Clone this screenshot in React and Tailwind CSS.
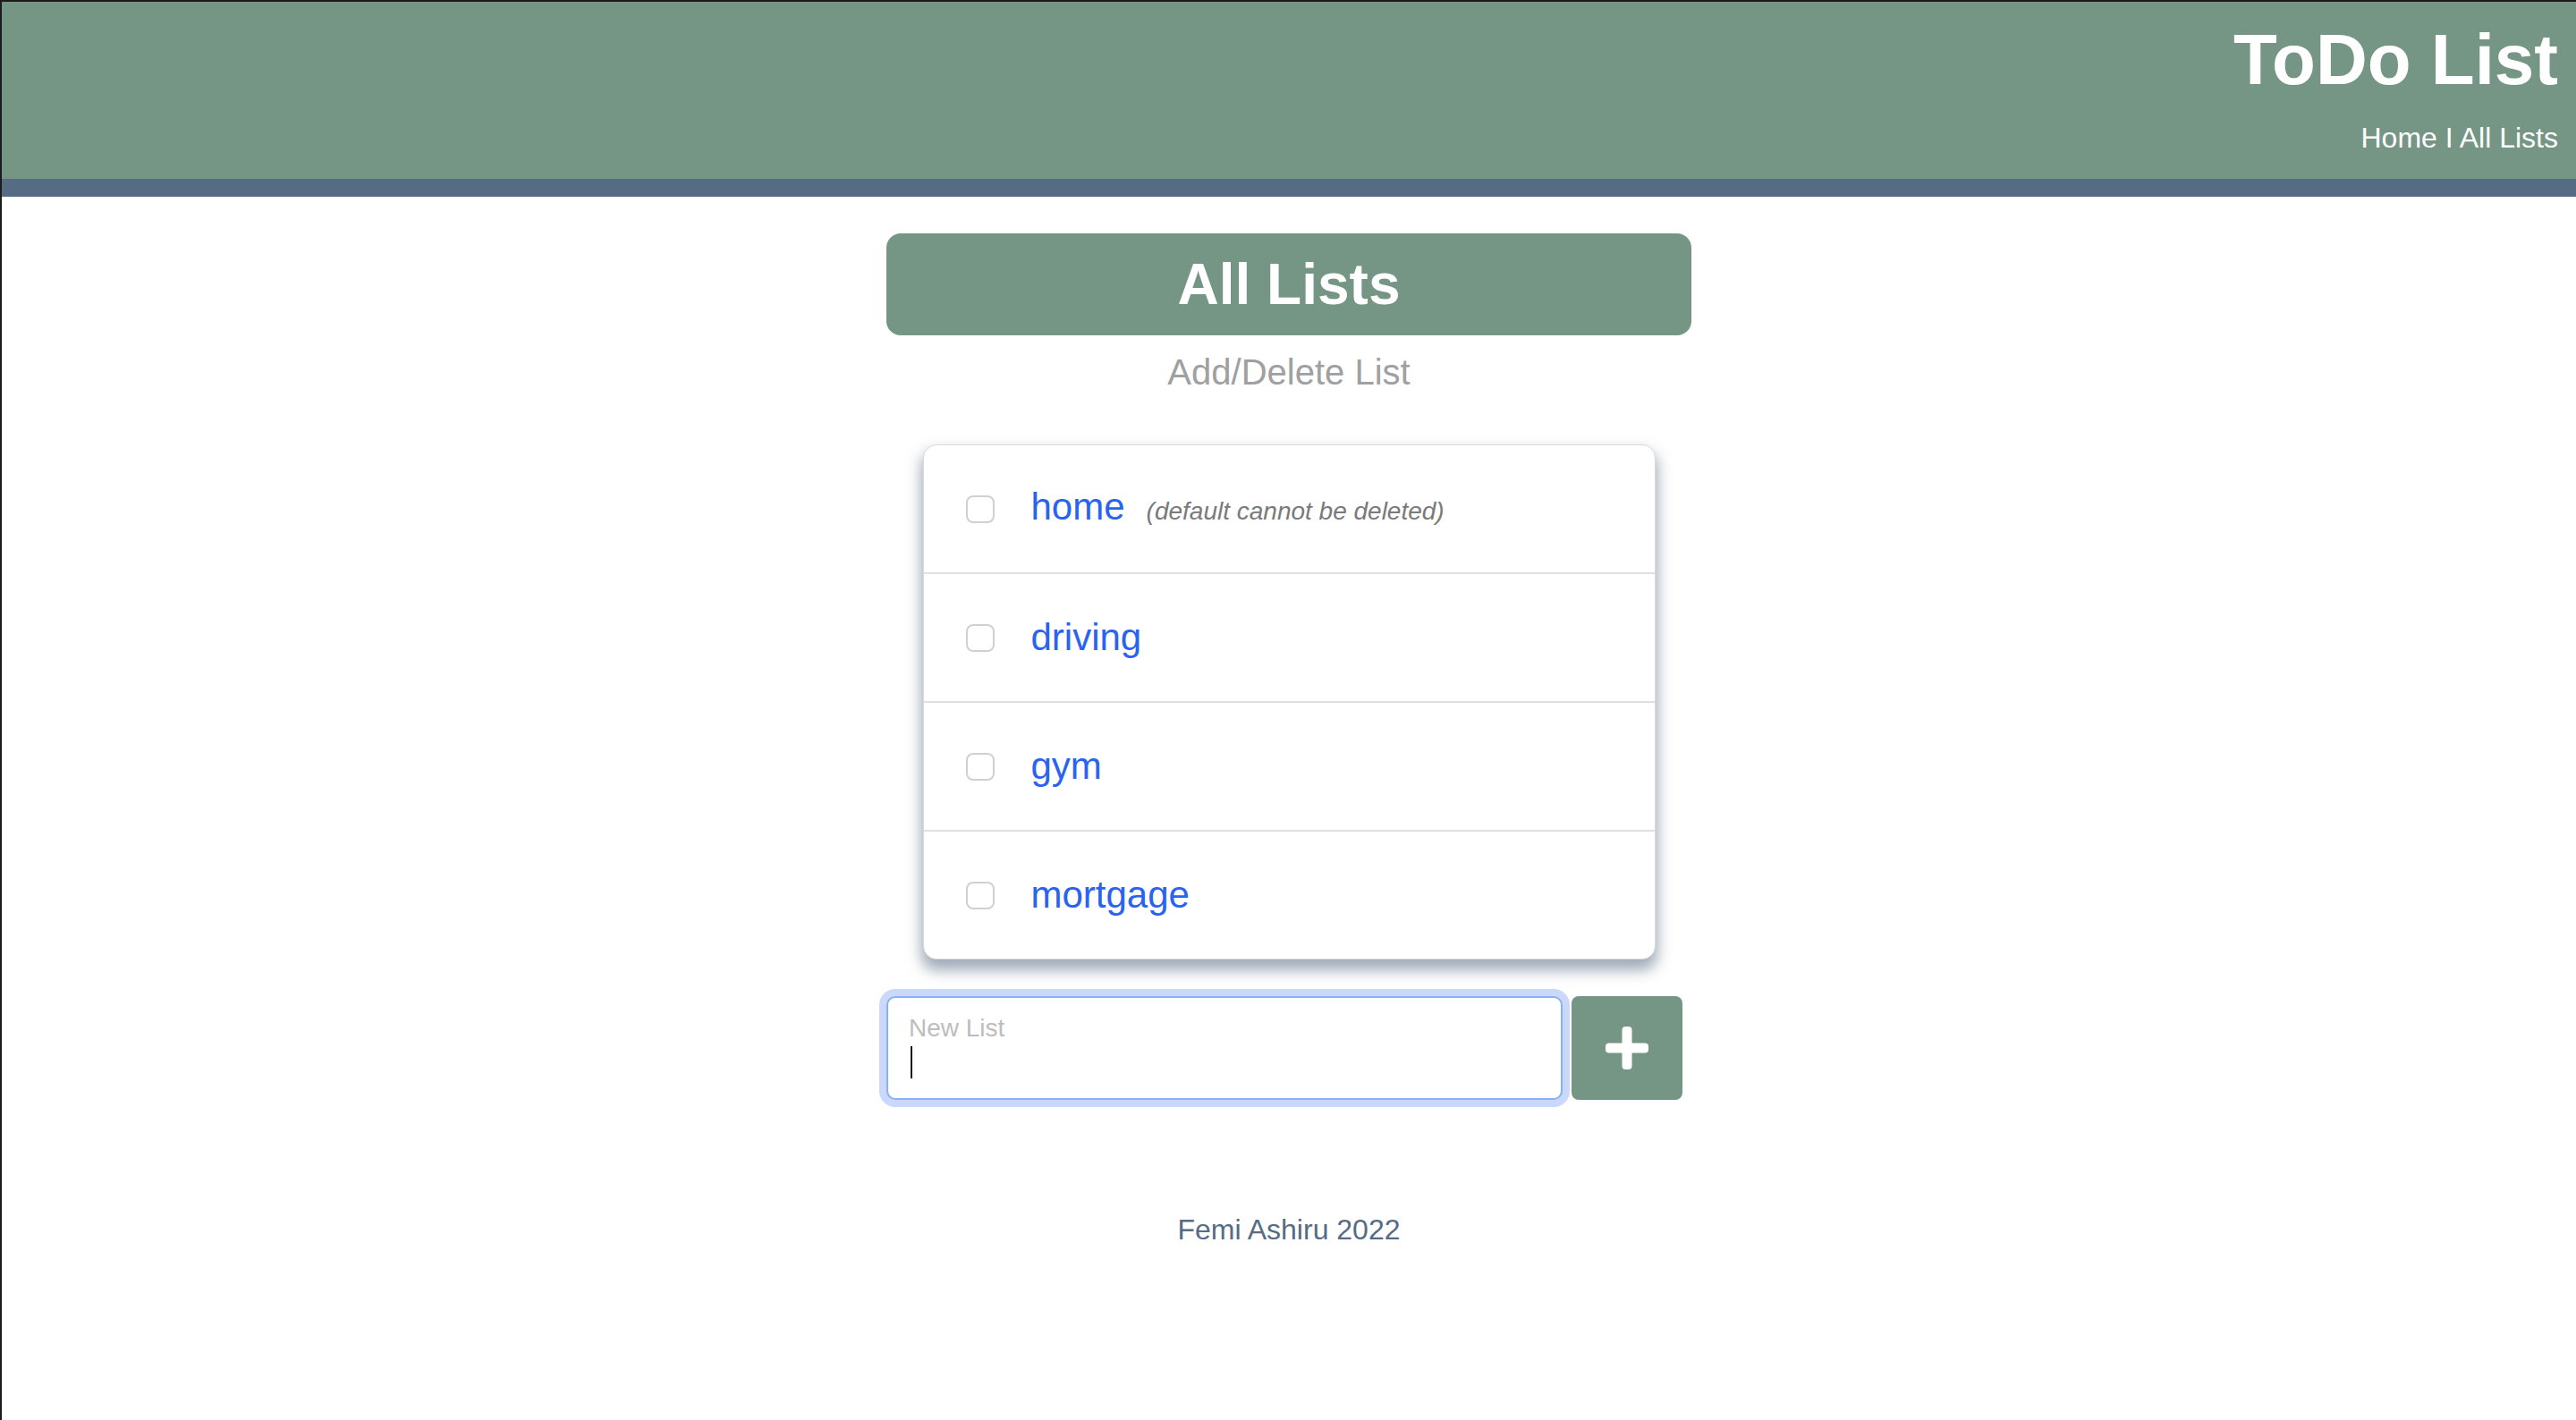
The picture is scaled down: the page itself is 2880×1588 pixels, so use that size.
import { useState } from 'react';

const lists = [
  { id: 1, name: 'home', note: '(default cannot be deleted)' },
  { id: 2, name: 'driving' },
  { id: 3, name: 'gym' },
  { id: 4, name: 'mortgage' },
];

function PlusIcon() {
  return (
    <svg width="48" height="48" viewBox="0 0 48 48" fill="#fff">
      <rect x="0" y="18.5" width="48" height="11" rx="4" />
      <rect x="18.5" y="0" width="11" height="48" rx="4" />
    </svg>
  );
}

export default function App() {
  const [checked, setChecked] = useState({});
  const [newList, setNewList] = useState('');

  const toggle = (id) => setChecked((c) => ({ ...c, [id]: !c[id] }));

  return (
    <div className="min-h-screen bg-white border-l-2 border-t-2 border-[#1c1c1c] font-[family-name:'Liberation_Sans',Arial,Helvetica,sans-serif]">
      {/* Header */}
      <header>
        <div className="h-[198px] bg-[#759685] flex flex-col items-end pr-[20px] pt-[25px] text-white">
          <h1 className="text-[80px] leading-[80px] font-bold">ToDo List</h1>
          <nav className="mt-[31px] text-[32px] leading-[32px]">
            <a href="#">Home</a> I <a href="#">All Lists</a>
          </nav>
        </div>
        <div className="h-[20px] bg-[#566b84]" />
      </header>

      <main className="flex flex-col items-center">
        {/* Banner */}
        <div className="mt-[41px] w-[900px] h-[114px] rounded-[16px] bg-[#759685] flex items-center justify-center">
          <h2 className="text-[64px] leading-none font-bold text-white">All Lists</h2>
        </div>
        <p className="mt-[21px] text-[40px] leading-[40px] text-[#a0a0a0]">Add/Delete List</p>

        {/* Lists */}
        <ul className="mt-[61px] w-[819px] bg-white border border-[#d9d9d9] rounded-[15px] overflow-hidden divide-y-2 divide-[#e0e0e0] shadow-[0_10px_16px_2px_rgba(80,100,125,0.55)]">
          {lists.map((item) => (
            <li key={item.id} className="box-content h-[142px] flex items-center pl-[47px]">
              <button
                onClick={() => toggle(item.id)}
                className={`w-[32px] h-[31px] rounded-[8px] border-2 ${
                  checked[item.id] ? 'bg-[#2b63f1] border-[#2b63f1]' : 'bg-white border-[#d0d0d0]'
                }`}
              />
              <div className="ml-[41px] flex items-baseline">
                <a href="#" className="text-[42px] leading-none text-[#2b63f1]">
                  {item.name}
                </a>
                {item.note && (
                  <span className="ml-[24px] text-[28px] italic text-[#7a7a7a]">{item.note}</span>
                )}
              </div>
            </li>
          ))}
        </ul>

        {/* New list form */}
        <form
          onSubmit={(e) => {
            e.preventDefault();
            setNewList('');
          }}
          className="mt-[41px] w-[900px] flex gap-[10px]"
        >
          <div className="relative w-[756px] h-[116px] rounded-[10px] border-2 border-[#8ab0f5] ring-[8px] ring-[#c9d8fb] bg-white">
            <label className="absolute top-[20px] left-[23px] text-[28px] leading-[28px] text-[#bdbdbd]">
              New List
            </label>
            {newList === '' && (
              <span className="absolute left-[25px] top-[54px] w-[2px] h-[36px] bg-[#111]" />
            )}
            <input
              value={newList}
              onChange={(e) => setNewList(e.target.value)}
              className="w-full h-full bg-transparent pt-[50px] pl-[25px] pr-[20px] text-[30px] outline-none caret-black"
            />
          </div>
          <button
            type="submit"
            className="w-[124px] h-[116px] rounded-[8px] bg-[#759685] flex items-center justify-center"
          >
            <PlusIcon />
          </button>
        </form>

        <footer className="mt-[129px] text-[32px] leading-[32px] text-[#566b84]">Femi Ashiru 2022</footer>
      </main>
    </div>
  );
}
